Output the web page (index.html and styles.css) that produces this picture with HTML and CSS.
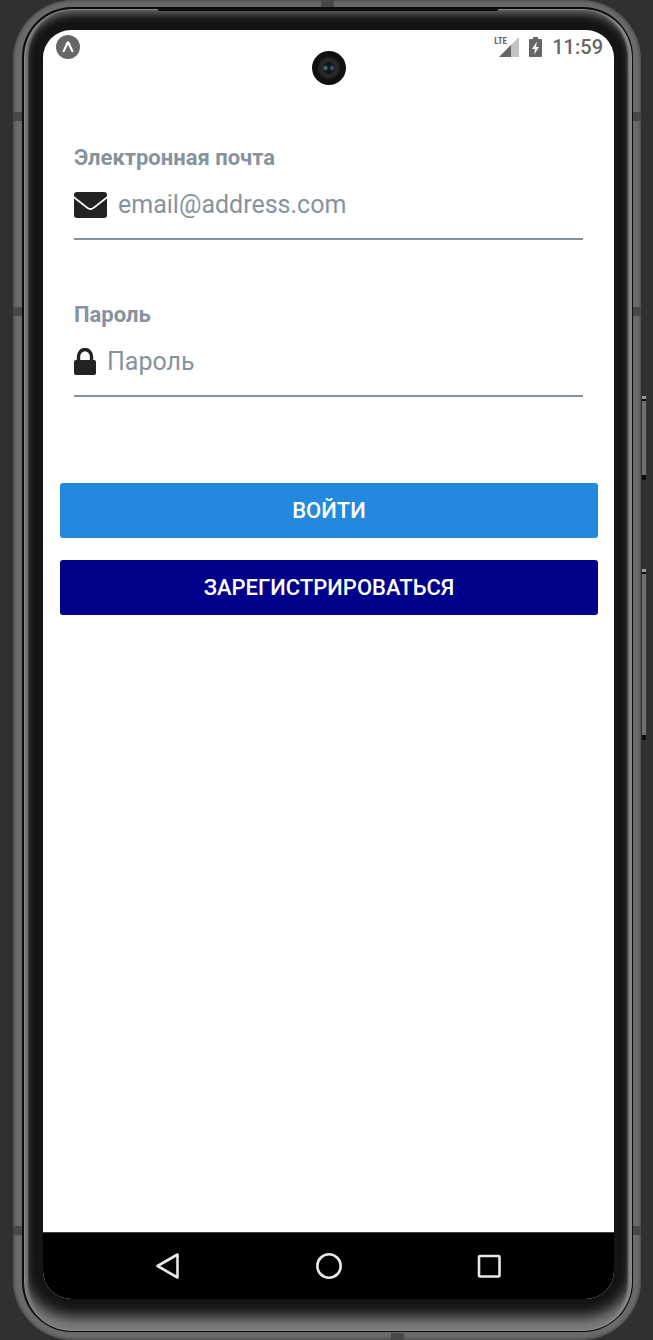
FILE: index.html
```html
<!DOCTYPE html>
<html lang="ru">
<head>
<meta charset="utf-8">
<meta name="viewport" content="width=device-width, initial-scale=1">
<title>Вход</title>
<link rel="stylesheet" href="styles.css">
</head>
<body>
<div class="phone">
  <span class="antenna antenna-top"></span>
  <span class="antenna antenna-bottom"></span>
  <span class="antenna antenna-side antenna-left antenna-upper"></span>
  <span class="antenna antenna-side antenna-left antenna-middle"></span>
  <span class="antenna antenna-side antenna-left antenna-lower"></span>
  <span class="antenna antenna-side antenna-right antenna-upper"></span>
  <span class="antenna antenna-side antenna-right antenna-middle"></span>
  <span class="antenna antenna-side antenna-right antenna-lower"></span>
  <span class="side-key key-power"></span>
  <span class="side-key key-volume"></span>
  <div class="bezel">
    <span class="speaker"></span>
    <div class="screen">
      <header class="status-bar">
        <svg class="app-icon" viewBox="0 0 24 24" aria-hidden="true">
          <circle cx="12" cy="12" r="12" fill="#666"/>
          <path d="M6.4 16.3C8 13.4 9.2 10 10.7 7.1Q12 5.3 13.3 7.1C14.8 10 16 13.4 17.6 16.3Q16.6 18 15.4 16.4L12 9.8 8.6 16.4Q7.4 18 6.4 16.3Z" fill="#fff"/>
        </svg>
        <div class="status-right">
          <span class="signal">
            <span class="network">LTE</span>
            <svg class="signal-icon" viewBox="0 0 20 20" aria-hidden="true">
              <path d="M20 0V20H0Z" fill="#c2c2c2"/>
              <path d="M12 8V20H0Z" fill="#666"/>
            </svg>
          </span>
          <svg class="battery-icon" viewBox="0 0 13 20" aria-hidden="true">
            <path d="M4 0H9V2H12Q13 2 13 3V19Q13 20 12 20H1Q0 20 0 19V3Q0 2 1 2H4Z" fill="#666"/>
            <path d="M7.8 4.5 3 12H6L5.2 17.5 10 10H7.1Z" fill="#fff"/>
          </svg>
          <time class="clock">11:59</time>
        </div>
      </header>
      <span class="camera"><span class="lens"></span></span>
      <main class="content">
        <form class="login">
          <div class="field">
            <label class="label" for="email">Электронная почта</label>
            <div class="entry">
              <svg class="mail-icon" viewBox="0 0 33 26" aria-hidden="true">
                <path d="M3 0H30Q33 0 33 3V4.2L19 15.2Q16.5 17 14 15.2L0 4.2V3Q0 0 3 0Z" fill="#222"/>
                <path d="M0 6.5 12.8 16.6Q16.5 19.3 20.2 16.6L33 6.5V23Q33 26 30 26H3Q0 26 0 23Z" fill="#222"/>
              </svg>
              <input class="input" id="email" type="email" placeholder="email@address.com">
            </div>
          </div>
          <div class="field">
            <label class="label" for="password">Пароль</label>
            <div class="entry">
              <svg class="lock-icon" viewBox="0 0 22 28" aria-hidden="true">
                <path d="M4.5 14V8.5A6.5 7 0 0 1 17.5 8.5V14" fill="none" stroke="#222" stroke-width="3.4"/>
                <rect y="12" width="22" height="15" rx="2" fill="#222"/>
              </svg>
              <input class="input" id="password" type="password" placeholder="Пароль">
            </div>
          </div>
          <div class="actions">
            <button class="button button-login" type="submit">ВОЙТИ</button>
            <button class="button button-register" type="button">ЗАРЕГИСТРИРОВАТЬСЯ</button>
          </div>
        </form>
      </main>
      <nav class="nav-bar" aria-label="Навигация">
        <button class="nav-button" type="button" aria-label="Назад">
          <svg class="nav-icon" viewBox="0 0 28 28" aria-hidden="true"><path d="M3.5 14 23.5 2.5V25.5Z"/></svg>
        </button>
        <button class="nav-button" type="button" aria-label="Домой">
          <svg class="nav-icon" viewBox="0 0 28 28" aria-hidden="true"><circle cx="14" cy="14" r="11.7"/></svg>
        </button>
        <button class="nav-button" type="button" aria-label="Недавние">
          <svg class="nav-icon" viewBox="0 0 28 28" aria-hidden="true"><rect x="4" y="4" width="20.5" height="20.5" rx="1"/></svg>
        </button>
      </nav>
    </div>
  </div>
</div>
</body>
</html>
```
FILE: styles.css
```css
* {
  box-sizing: border-box;
}

body {
  margin: 0;
  background: #2e3032;
  font-family: Roboto, "Liberation Sans", sans-serif;
}

.phone {
  position: relative;
  display: flex;
  min-height: 100vh;
  margin: 0 12px 0 13px;
  padding: 7px 8px 8px 9px;
  border-radius: 60px;
  background: #6a6a6a;
  box-shadow: inset 0 0 3px 1px #484848;
}

.bezel {
  position: relative;
  flex: 1;
  display: flex;
  padding: 21px 18px 32px 19px;
  border: 2px solid #0c0c0c;
  border-bottom-width: 1px;
  border-right-width: 1px;
  border-radius: 50px;
  background: #141414;
  box-shadow:
    inset 0 0 1px 1px #8a8a8a,
    inset 5px 0 2px -1px #777,
    inset -5px 0 2px -1px #858585,
    inset 0 5px 9px 0 #6a6a6a,
    inset 0 -17px 14px -3px #808080;
}

.speaker {
  position: absolute;
  top: -1px;
  left: 22%;
  right: 22%;
  height: 3px;
  border-radius: 2px;
  background: #0c0c0c;
}

.antenna {
  position: absolute;
  width: 13px;
  height: 7px;
  background: #484848;
}

.antenna-top {
  top: 0;
  left: 308px;
}

.antenna-bottom {
  bottom: 0;
  left: 378px;
}

.antenna-side {
  width: 9px;
  height: 9px;
}

.antenna-left {
  left: 0;
}

.antenna-right {
  right: 0;
}

.antenna-upper {
  top: 112px;
}

.antenna-middle {
  top: 307px;
}

.antenna-lower {
  bottom: 105px;
}

.side-key {
  position: absolute;
  right: -5px;
  width: 4px;
  background: #707070;
  border-top: 3px solid #999;
  border-bottom: 5px solid #0c0c0c;
  box-shadow: inset 0 2px #0c0c0c;
}

.key-power {
  top: 396px;
  height: 84px;
}

.key-volume {
  top: 569px;
  height: 171px;
}

.screen {
  position: relative;
  flex: 1;
  display: flex;
  flex-direction: column;
  overflow: hidden;
  border-radius: 28px;
  background: #fff;
}

.status-bar {
  display: flex;
  align-items: center;
  justify-content: space-between;
  height: 34px;
  padding: 0 11px 0 13px;
}

.app-icon {
  width: 24px;
  height: 24px;
}

.status-right {
  display: flex;
  align-items: center;
  gap: 10px;
}

.signal {
  position: relative;
  display: flex;
  padding-left: 5px;
}

.network {
  position: absolute;
  top: -1px;
  left: 0;
  color: #666;
  font-family: "Roboto Condensed", Roboto, sans-serif;
  font-size: 9px;
  font-weight: 700;
  line-height: 10px;
}

.signal-icon {
  width: 20px;
  height: 20px;
}

.battery-icon {
  width: 13px;
  height: 20px;
}

.clock {
  color: #666;
  font-size: 20px;
  font-weight: 500;
  line-height: 24px;
}

.camera {
  position: absolute;
  top: 21px;
  left: 50%;
  display: grid;
  place-items: center;
  width: 34px;
  height: 34px;
  margin-left: -17px;
  border-radius: 50%;
  background: #101010;
}

.lens {
  width: 22px;
  height: 22px;
  border-radius: 50%;
  background:
    radial-gradient(circle at 34% 50%, #3d7775 0 1px, transparent 3px),
    radial-gradient(circle at 64% 50%, #3b5590 0 1px, transparent 3px),
    radial-gradient(circle, #10151c 0 5px, #2b2b2b 7px, #1f1f1f 11px);
}

.content {
  flex: 1;
  padding: 80px 16px 24px 17px;
}

.login,
.field,
.actions {
  display: flex;
  flex-direction: column;
}

.login {
  gap: 61px;
}

.field {
  margin: 0 15px 0 14px;
  border-bottom: 2px solid #86939e;
}

.label {
  color: #86939e;
  font-size: 22px;
  font-weight: 700;
  line-height: 27px;
}

.entry {
  display: flex;
  align-items: center;
  gap: 11px;
  height: 67px;
}

.mail-icon {
  width: 33px;
  height: 26px;
}

.lock-icon {
  width: 22px;
  height: 28px;
}

.input {
  flex: 1;
  min-width: 0;
  padding: 0;
  border: 0;
  outline: 0;
  background: transparent;
  color: #222;
  font: 400 25px/34px Roboto, "Liberation Sans", sans-serif;
}

.input::placeholder {
  color: #86939e;
  opacity: 1;
}

.actions {
  gap: 22px;
  padding-top: 25px;
}

.button {
  height: 55px;
  border: 0;
  border-radius: 3px;
  color: #fff;
  font: 500 22px/28px Roboto, "Liberation Sans", sans-serif;
}

.button-login {
  background: #2289dc;
}

.button-register {
  background: #00008b;
}

.nav-bar {
  display: flex;
  justify-content: space-between;
  padding: 19px 111px;
  border-top: 1px solid #444;
  background: #000;
}

.nav-button {
  display: flex;
  padding: 0;
  border: 0;
  background: none;
}

.nav-icon {
  width: 28px;
  height: 28px;
  fill: none;
  stroke: #e8e8e8;
  stroke-width: 2.6;
  stroke-linejoin: round;
}
```
